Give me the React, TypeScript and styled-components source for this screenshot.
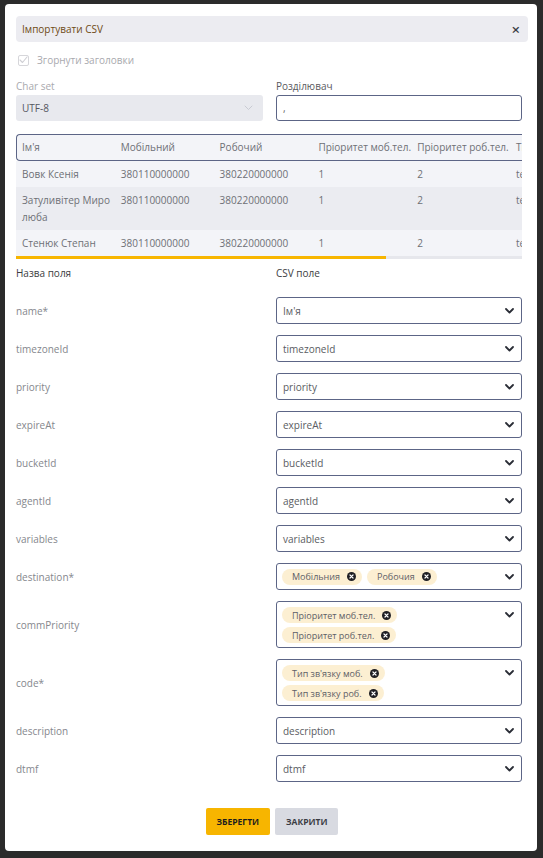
import styled, { createGlobalStyle } from 'styled-components';

const GlobalStyle = createGlobalStyle`
  html, body {
    margin: 0;
    padding: 0;
    background: #2b2b2b;
  }
  body {
    font-family: 'Open Sans', 'Noto Sans', sans-serif;
    -webkit-font-smoothing: antialiased;
  }
  * {
    box-sizing: border-box;
  }
`;

type Mapping = {
  field: string;
  value?: string;
  chips?: string[];
  stacked?: boolean;
};

const columns = [
  'Ім\'я',
  'Мобільний',
  'Робочий',
  'Пріоритет моб.тел.',
  'Пріоритет роб.тел.',
  'Тип зв\'язку моб.',
  'Тип зв\'язку роб.',
];

const rows = [
  ['Вовк Ксенія', '380110000000', '380220000000', '1', '2', 'tel', 'tel'],
  ['Затуливітер Миролюба', '380110000000', '380220000000', '1', '2', 'tel', 'tel'],
  ['Стенюк Степан', '380110000000', '380220000000', '1', '2', 'tel', 'tel'],
];

const mappings: Mapping[] = [
  { field: 'name*', value: 'Ім\'я' },
  { field: 'timezoneId', value: 'timezoneId' },
  { field: 'priority', value: 'priority' },
  { field: 'expireAt', value: 'expireAt' },
  { field: 'bucketId', value: 'bucketId' },
  { field: 'agentId', value: 'agentId' },
  { field: 'variables', value: 'variables' },
  { field: 'destination*', chips: ['Мобільния', 'Робочия'] },
  {
    field: 'commPriority',
    chips: ['Пріоритет моб.тел.', 'Пріоритет роб.тел.'],
    stacked: true,
  },
  {
    field: 'code*',
    chips: ['Тип зв\'язку моб.', 'Тип зв\'язку роб.'],
    stacked: true,
  },
  { field: 'description', value: 'description' },
  { field: 'dtmf', value: 'dtmf' },
];

const COL_WIDTH = 98.8;
const TABLE_WIDTH = COL_WIDTH * columns.length;
// visible part of the preview table vs. its full width
const scrollRatio = 506 / TABLE_WIDTH;

const Chevron = ({ light }: { light?: boolean }) => (
  <svg width="9" height="6" viewBox="0 0 9 6" fill="none">
    <path
      d="M1 1l3.5 3.5L8 1"
      stroke={light ? '#c9cbd3' : '#2a2d36'}
      strokeWidth={light ? 1 : 1.8}
      strokeLinecap="round"
      strokeLinejoin="round"
    />
  </svg>
);

const RemoveIcon = () => (
  <svg width="9" height="9" viewBox="0 0 10 10">
    <circle cx="5" cy="5" r="5" fill="#1f1f24" />
    <path
      d="M3.3 3.3l3.4 3.4M6.7 3.3L3.3 6.7"
      stroke="#fff"
      strokeWidth="1.3"
      strokeLinecap="round"
    />
  </svg>
);

const ImportCsvDialog = () => {
  return (
    <Modal>
      <Header>
        <Title>Імпортувати CSV</Title>
        <CloseButton>×</CloseButton>
      </Header>

      <Body>
        <CheckRow>
          <CheckBox>
            <svg width="9" height="8" viewBox="0 0 9 8" fill="none">
              <path
                d="M1 4l2.5 2.5L8 1"
                stroke="#cfcfd4"
                strokeWidth="1.1"
                strokeLinecap="round"
                strokeLinejoin="round"
              />
            </svg>
          </CheckBox>
          Згорнути заголовки
        </CheckRow>

        <SettingsGrid>
          <Field>
            <FieldLabel $muted>Char set</FieldLabel>
            <DisabledSelect>
              UTF-8
              <Chevron light />
            </DisabledSelect>
          </Field>
          <Field>
            <FieldLabel>Розділювач</FieldLabel>
            <TextInput>,</TextInput>
          </Field>
        </SettingsGrid>

        <TablePanel>
          <TableViewport>
            <PreviewTable style={{ width: TABLE_WIDTH }}>
              <thead>
                <tr>
                  {columns.map((col) => (
                    <th key={col}>{col}</th>
                  ))}
                </tr>
              </thead>
              <tbody>
                {rows.map((row, i) => (
                  <tr key={i}>
                    {row.map((cell, j) => (
                      <td key={j}>{cell}</td>
                    ))}
                  </tr>
                ))}
              </tbody>
            </PreviewTable>
          </TableViewport>
          <ScrollTrack>
            <ScrollThumb style={{ width: `${scrollRatio * 100}%` }} />
          </ScrollTrack>
        </TablePanel>

        <MapHeading>
          <span>Назва поля</span>
          <span>CSV поле</span>
        </MapHeading>

        <MapList>
          {mappings.map((m) => (
            <MapRow key={m.field}>
              <MapLabel>{m.field}</MapLabel>
              <SelectBox $tall={m.stacked}>
                {m.chips ? (
                  <ChipList $stacked={m.stacked}>
                    {m.chips.map((chip) => (
                      <Chip key={chip}>
                        {chip}
                        <RemoveIcon />
                      </Chip>
                    ))}
                  </ChipList>
                ) : (
                  <SelectValue>{m.value}</SelectValue>
                )}
                <ChevronSlot>
                  <Chevron />
                </ChevronSlot>
              </SelectBox>
            </MapRow>
          ))}
        </MapList>

        <Actions>
          <Button $primary>Зберегти</Button>
          <Button>Закрити</Button>
        </Actions>
      </Body>
    </Modal>
  );
};

export default function App() {
  return (
    <>
      <GlobalStyle />
      <ImportCsvDialog />
    </>
  );
}

const Modal = styled.div`
  margin: 4px 6px 7px 5px;
  width: 532px;
  height: 847px;
  background: #ffffff;
  border-radius: 4px;
  padding: 12px 9px 0 11px;
`;

const Header = styled.div`
  height: 26px;
  display: flex;
  align-items: center;
  justify-content: space-between;
  background: #ececf1;
  border-radius: 4px;
  padding: 0 8px 0 6px;
`;

const Title = styled.h1`
  margin: 0;
  font-size: 10px;
  font-weight: 500;
  color: #6e4a14;
`;

const CloseButton = styled.span`
  font-size: 15px;
  line-height: 1;
  color: #3a3d45;
  font-weight: 600;
`;

const Body = styled.div`
  padding-right: 6px;
`;

const CheckRow = styled.label`
  display: flex;
  align-items: center;
  gap: 8px;
  margin-top: 12px;
  margin-left: 2px;
  height: 12px;
  font-size: 10px;
  color: #a9a9ae;
`;

const CheckBox = styled.span`
  width: 11px;
  height: 11px;
  border: 1px solid #d6d6da;
  border-radius: 2px;
  display: flex;
  align-items: center;
  justify-content: center;
`;

const SettingsGrid = styled.div`
  display: grid;
  grid-template-columns: 247px 246px;
  column-gap: 13px;
  margin-top: 15px;
`;

const Field = styled.div`
  display: flex;
  flex-direction: column;
  gap: 3px;
`;

const FieldLabel = styled.span<{ $muted?: boolean }>`
  font-size: 10px;
  line-height: 11px;
  color: ${(p) => (p.$muted ? '#a9a9ae' : '#5a5a60')};
`;

const DisabledSelect = styled.div`
  height: 26px;
  display: flex;
  align-items: center;
  justify-content: space-between;
  padding: 0 10px 0 6px;
  background: #e8e9ee;
  border-radius: 3px;
  font-size: 10px;
  color: #55575e;
`;

const TextInput = styled.div`
  height: 26px;
  display: flex;
  align-items: center;
  padding: 0 6px;
  border: 1px solid #5c6586;
  border-radius: 3px;
  font-size: 10px;
  color: #666;
`;

const TablePanel = styled.div`
  margin-top: 13px;
`;

const TableViewport = styled.div`
  overflow: hidden;
`;

const ScrollTrack = styled.div`
  height: 3px;
  background: #e6e7ec;
`;

const ScrollThumb = styled.div`
  height: 100%;
  background: #f7b500;
`;

const PreviewTable = styled.table`
  border-collapse: separate;
  border-spacing: 0;
  table-layout: fixed;
  font-size: 10px;
  color: #6e7076;

  th,
  td {
    text-align: left;
    font-weight: 400;
    padding: 0 3px 0 6px;
    vertical-align: top;
    line-height: 17px;
  }

  th {
    height: 27px;
    vertical-align: middle;
    white-space: nowrap;
    overflow: hidden;
    background: #f3f4f8;
    border-top: 1px solid #5c6586;
    border-bottom: 1px solid #5c6586;
  }

  th:first-child {
    border-left: 1px solid #5c6586;
    border-radius: 4px 0 0 4px;
    padding-left: 5px;
  }

  td {
    padding-top: 5px;
    padding-bottom: 4px;
    background: #f3f4f8;
    word-break: break-all;
  }

  tbody tr:nth-child(2) td {
    background: #ebecf1;
  }
`;

const MapHeading = styled.div`
  display: grid;
  grid-template-columns: 260px 1fr;
  margin-top: 8px;
  font-size: 10px;
  line-height: 12px;
  font-weight: 500;
  color: #3c3d42;
`;

const MapList = styled.div`
  display: flex;
  flex-direction: column;
  gap: 11px;
  margin-top: 18px;
`;

const MapRow = styled.div`
  display: grid;
  grid-template-columns: 260px 246px;
  align-items: center;
`;

const MapLabel = styled.span`
  font-size: 10px;
  color: #85878d;
`;

const SelectBox = styled.div<{ $tall?: boolean }>`
  min-height: 27px;
  display: flex;
  align-items: ${(p) => (p.$tall ? 'flex-start' : 'center')};
  justify-content: space-between;
  padding: ${(p) => (p.$tall ? '5px 6px 4px 5px' : '0 6px 0 5px')};
  border: 1px solid #5c6586;
  border-radius: 3px;
`;

const SelectValue = styled.span`
  padding-left: 1px;
  font-size: 10px;
  color: #5a5c62;
`;

const ChevronSlot = styled.span`
  display: flex;
  align-items: center;
  height: 16px;
  padding-right: 1px;
`;

const ChipList = styled.div<{ $stacked?: boolean }>`
  display: flex;
  flex-direction: ${(p) => (p.$stacked ? 'column' : 'row')};
  align-items: flex-start;
  gap: ${(p) => (p.$stacked ? '4px' : '5px')};
`;

const Chip = styled.span`
  height: 16px;
  display: inline-flex;
  align-items: center;
  gap: 7px;
  padding: 0 6px 0 10px;
  border-radius: 8px;
  background: #fcefd2;
  font-size: 9px;
  color: #5e6066;
  white-space: nowrap;
`;

const Actions = styled.div`
  display: flex;
  justify-content: center;
  gap: 5px;
  margin-top: 26px;
  padding-left: 6px;
`;

const Button = styled.button<{ $primary?: boolean }>`
  height: 27px;
  padding: 0 11px;
  border: none;
  border-radius: 2px;
  font-family: inherit;
  font-size: 8.5px;
  font-weight: 700;
  text-transform: uppercase;
  color: ${(p) => (p.$primary ? '#1d1d1d' : '#3a3c44')};
  background: ${(p) => (p.$primary ? '#f7b500' : '#d8dae1')};
`;
